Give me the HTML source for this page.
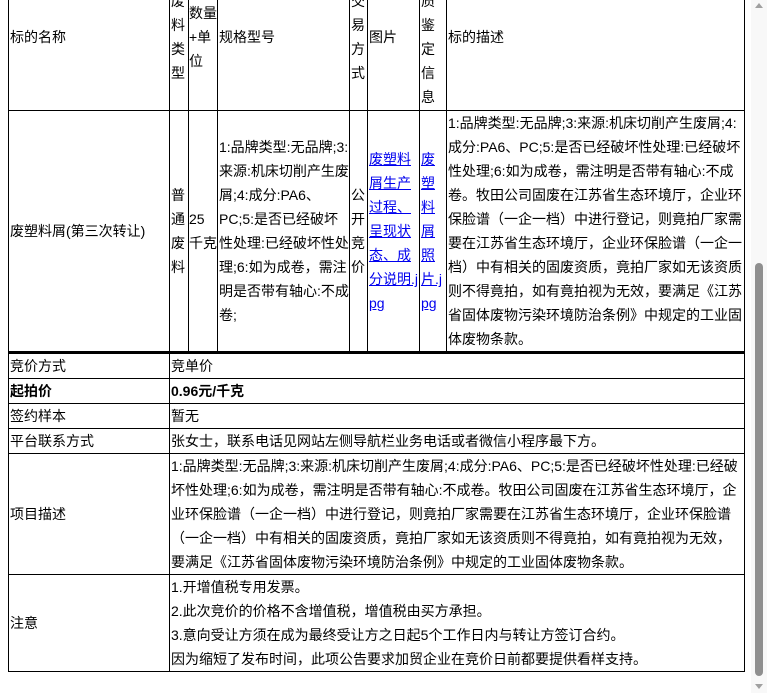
<!DOCTYPE html>
<html><head><meta charset="utf-8"><style>
html,body{margin:0;padding:0;width:767px;height:693px;overflow:hidden;background:#fff;}
body{font-family:"Liberation Sans","Noto Sans CJK SC",sans-serif;font-size:14px;line-height:24px;color:#000;position:relative;}
table{border-collapse:collapse;position:absolute;table-layout:fixed;}
td{border:1px solid #000;padding:0 0 0 1px;vertical-align:middle;word-break:break-all;overflow:hidden;}
td.np{padding:0;overflow:visible;}
a{color:#00e;text-decoration:underline;}
#t1{left:8px;top:-37px;width:736px;}
#t2{left:8px;top:352px;width:736px;border-top:2px solid #000;}
#t2 td{height:24px;}
.sb{position:absolute;left:751px;top:0;width:16px;height:693px;background:#f8f8f8;}
.th{position:absolute;left:755px;top:263px;width:8px;height:413px;background:#8f8f8f;border-radius:4px;}
.up{position:absolute;left:755px;top:3px;width:0;height:0;border-left:4px solid transparent;border-right:4px solid transparent;border-bottom:5px solid #a0a0a0;}
.dn{position:absolute;left:755px;top:684px;width:0;height:0;border-left:4px solid transparent;border-right:4px solid transparent;border-top:5px solid #a0a0a0;}
</style></head><body>
<table id="t1">
<colgroup><col style="width:161px"><col style="width:19px"><col style="width:29px"><col style="width:132px"><col style="width:18px"><col style="width:52px"><col style="width:27px"><col style="width:298px"></colgroup>
<tr style="height:147px">
<td>标的名称</td><td>废料类型</td><td class="np"><span style="white-space:nowrap">数量</span><br>+单<br>位</td><td>规格型号</td><td>交易方式</td><td>图片</td><td>物质鉴定信息</td><td>标的描述</td></tr>
<tr style="height:241px">
<td>废塑料屑(第三次转让)</td><td>普通废料</td><td class="np">25<br><span style="white-space:nowrap">千克</span></td><td>1:品牌类型:无品牌;3:来源:机床切削产生废屑;4:成分:PA6、<br>PC;5:是否已经破坏性处理:已经破坏性处理;6:如为成卷，需注明是否带有轴心:不成卷;</td><td>公开竞价</td><td><a>废塑料屑生产过程、呈现状态、成分说明.jpg</a></td><td><a>废塑料屑照片.jpg</a></td><td>1:品牌类型:无品牌;3:来源:机床切削产生废屑;4:成分:PA6、PC;5:是否已经破坏性处理:已经破坏性处理;6:如为成卷，需注明是否带有轴心:不成卷。牧田公司固废在江苏省生态环境厅，企业环保脸谱（一企一档）中进行登记，则竟拍厂家需要在江苏省生态环境厅，企业环保脸谱（一企一档）中有相关的固废资质，竟拍厂家如无该资质则不得竟拍，如有竟拍视为无效，要满足《江苏省固体废物污染环境防治条例》中规定的工业固体废物条款。</td></tr>
</table>
<table id="t2">
<colgroup><col style="width:161px"><col style="width:575px"></colgroup>
<tr><td>竞价方式</td><td>竞单价</td></tr>
<tr><td><b>起拍价</b></td><td><b>0.96元/千克</b></td></tr>
<tr><td>签约样本</td><td>暂无</td></tr>
<tr><td>平台联系方式</td><td>张女士，联系电话见网站左侧导航栏业务电话或者微信小程序最下方。</td></tr>
<tr><td>项目描述</td><td>1:品牌类型:无品牌;3:来源:机床切削产生废屑;4:成分:PA6、PC;5:是否已经破坏性处理:已经破坏性处理;6:如为成卷，需注明是否带有轴心:不成卷。牧田公司固废在江苏省生态环境厅，企业环保脸谱（一企一档）中进行登记，则竟拍厂家需要在江苏省生态环境厅，企业环保脸谱（一企一档）中有相关的固废资质，竟拍厂家如无该资质则不得竟拍，如有竟拍视为无效，<br>要满足《江苏省固体废物污染环境防治条例》中规定的工业固体废物条款。</td></tr>
<tr><td>注意</td><td>1.开增值税专用发票。<br>2.此次竞价的价格不含增值税，增值税由买方承担。<br>3.意向受让方须在成为最终受让方之日起5个工作日内与转让方签订合约。<br>因为缩短了发布时间，此项公告要求加贸企业在竞价日前都要提供看样支持。</td></tr>
</table>
<div class="sb"></div><div class="th"></div><div class="up"></div><div class="dn"></div>
</body></html>
